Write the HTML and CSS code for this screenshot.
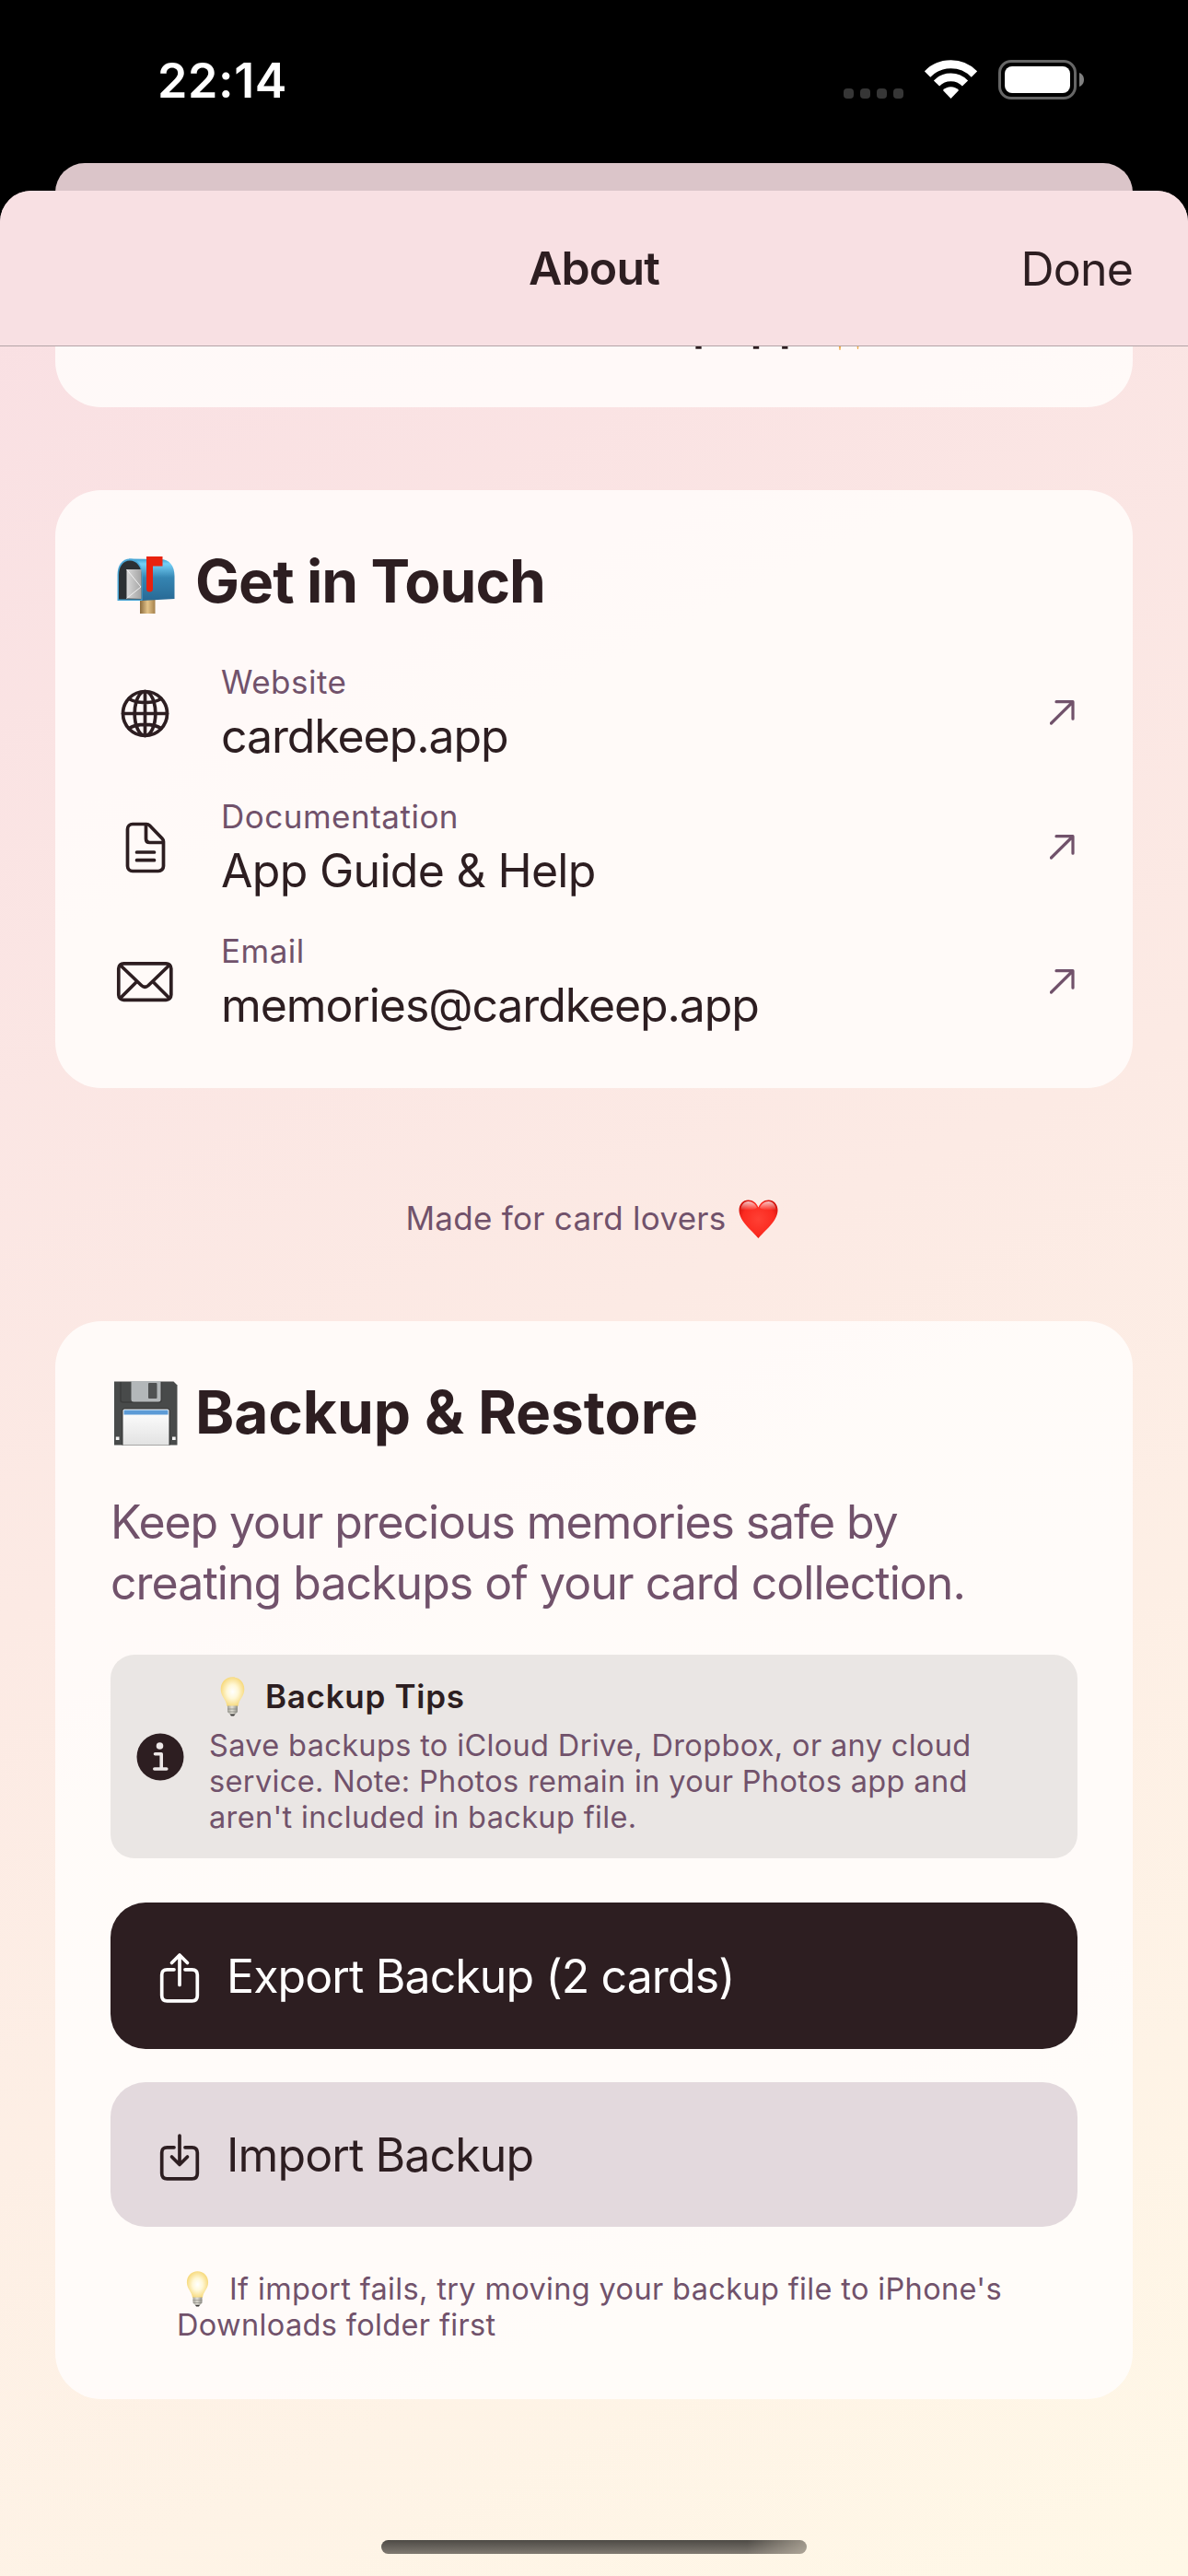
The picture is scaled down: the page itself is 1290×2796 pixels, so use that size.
FILE: index.html
```html
<!DOCTYPE html>
<html lang="en">
<head>
<meta charset="utf-8">
<title>About</title>
<link rel="stylesheet" href="styles.css">
</head>
<body>
<svg class="defs" aria-hidden="true">
  <defs>
    <radialGradient id="glow" cx="50%" cy="50%" r="58%">
      <stop offset="0" stop-color="#ffffff"/><stop offset=".4" stop-color="#fff8d8"/><stop offset="1" stop-color="#f5d267"/>
    </radialGradient>
    <linearGradient id="screw" x2="1" y2="0">
      <stop offset="0" stop-color="#a3a29a"/><stop offset=".45" stop-color="#e2e0d6"/><stop offset="1" stop-color="#908f88"/>
    </linearGradient>
    <linearGradient id="boxBlue" x2="0" y2="1">
      <stop offset="0" stop-color="#3d9fd0"/><stop offset=".12" stop-color="#74d0f7"/><stop offset=".45" stop-color="#3585b2"/><stop offset="1" stop-color="#286995"/>
    </linearGradient>
    <linearGradient id="post" x2="1" y2="0">
      <stop offset="0" stop-color="#8a6a3c"/><stop offset=".5" stop-color="#e4c48a"/><stop offset="1" stop-color="#a5814c"/>
    </linearGradient>
    <linearGradient id="letter" x2="1" y2="0">
      <stop offset="0" stop-color="#d9d9d9"/><stop offset="1" stop-color="#a4a4a4"/>
    </linearGradient>
    <linearGradient id="paper" x2="0" y2="1">
      <stop offset="0" stop-color="#ffffff"/><stop offset="1" stop-color="#e2e2e2"/>
    </linearGradient>
    <radialGradient id="heartRed" cx="50%" cy="50%" r="58%">
      <stop offset="0" stop-color="#ff4034"/><stop offset=".7" stop-color="#fb2a20"/><stop offset="1" stop-color="#d3120c"/>
    </radialGradient>
    <linearGradient id="shine" x2="0" y2="1">
      <stop offset="0" stop-color="#fff" stop-opacity=".75"/><stop offset="1" stop-color="#fff" stop-opacity="0"/>
    </linearGradient>
    <symbol id="bulb" viewBox="0 0 26 43">
      <path d="M13 .3C5.500.3.2 6 .2 13.500c0 8 6 11 6.800 18.500h12C19.800 24.500 25.800 21.500 25.800 13.500 25.800 6 20.500.3 13 .3z" fill="url(#glow)"/>
      <path d="M7.500 31.500h11v6.500l-2.500 2.500h-6l-2.500-2.500z" fill="url(#screw)"/>
      <path d="M7.500 35h11M8 38h10" stroke="#8c8b84" stroke-width=".8"/>
      <path d="M10 40.500h6l-1.500 2h-3z" fill="#3b3a38"/>
    </symbol>
    <symbol id="arrow" viewBox="0 0 30 30">
      <path d="M1.500 26 24.700 3M7 2.700h18v18.500" fill="none" stroke="currentColor" stroke-width="3.200" stroke-linecap="round" stroke-linejoin="round"/>
    </symbol>
  </defs>
</svg>

<header class="status">
  <span class="time">22:14</span>
  <div class="signals">
    <div class="dots"><i></i><i></i><i></i><i></i></div>
    <svg class="wifi" viewBox="0 0 57 42" width="57" height="42">
      <g fill="none" stroke="#fff">
        <path d="M3 15.500A35.500 35.500 0 0 1 54 15.500" stroke-width="9"/>
        <path d="M13 25.500A21.500 21.500 0 0 1 44 25.500" stroke-width="8.600"/>
      </g>
      <path d="M28.500 42l-8.600-9a12 12 0 0 1 17.200 0z" fill="#fff"/>
    </svg>
    <svg class="battery" viewBox="0 0 93 43" width="93" height="43">
      <rect x="1.500" y="1.500" width="82" height="40" rx="12.500" fill="none" stroke="#666" stroke-width="3"/>
      <rect x="7" y="7" width="71" height="29" rx="8" fill="#fff"/>
      <path d="M88 14c3 1 5 4 5 7.500s-2 6.500-5 7.500z" fill="#808080"/>
    </svg>
  </div>
</header>

<div class="behind"></div>

<main class="sheet">
  <nav class="bar">
    <h1 class="title">About</h1>
    <a class="done">Done</a>
  </nav>

  <div class="content">
    <section class="card card-tail">
      <span class="tail-text">p app</span>
      <svg width="40" height="60" viewBox="0 0 40 60"><path d="M8 50h4l-1.500 9h-1zM28 50h3l-1 8h-1z" fill="#f0ad4e"/></svg>
    </section>

    <section class="card touch">
      <h2 class="heading">
        <svg viewBox="0 0 76 78" width="76" height="78">
          <path d="M32 59h16.500v15H32z" fill="url(#post)"/>
          <path d="M20 14.500 54 15c10 0 15.500 7 15.500 18v25l-36 2z" fill="url(#boxBlue)"/>
          <path d="M7.500 60V32c0-10 5-17.500 13.500-17.500S34.500 22 34.500 32v28z" fill="#4ba7d6"/>
          <path d="M9 58.500V32c0-9 4.500-15.500 12-15.500S33.500 23 33.500 32v26.500z" fill="#2c3033"/>
          <path d="M17.500 26h16v32l-16-.5z" fill="url(#letter)"/>
          <path d="M17.500 26l15.500 19-15.500 12.500" fill="none" stroke="#f1f1f1" stroke-width="1"/>
          <path d="M39 12h17.500v10.500H46V47a3.500 3.500 0 0 1-7 0z" fill="#e8210e"/>
        </svg>
        <span>Get in Touch</span>
      </h2>
      <div class="links">
        <a class="link">
          <svg class="glyph" viewBox="0 0 75 60" width="75" height="60">
            <circle cx="37.500" cy="30.500" r="24"/><ellipse cx="37.500" cy="30.500" rx="11.300" ry="24"/>
            <path d="M37.500 6.500v48M13.500 30.500h48M20 14.500c9 5.500 26 5.500 35 0M20 46.500c9-5.500 26-5.500 35 0"/>
          </svg>
          <span class="text"><small class="label">Website</small><span class="value">cardkeep.app</span></span>
          <svg class="arrow" width="30" height="30"><use href="#arrow"/></svg>
        </a>
        <a class="link">
          <svg class="glyph" viewBox="0 0 75 60" width="75" height="60">
            <path d="M24 4.500h15c1.500 0 2.500.5 3.500 1.500l13.500 14c1 1 1.500 2 1.500 3.500V50a5.500 5.500 0 0 1-5.500 5.500H24a5.500 5.500 0 0 1-5.500-5.500V10A5.500 5.500 0 0 1 24 4.500z"/>
            <path d="M38.500 5v15.500c0 2.500 1.500 4 4 4H57M28.500 35h19M28.500 43.700h19"/>
          </svg>
          <span class="text"><small class="label">Documentation</small><span class="value">App Guide &amp; Help</span></span>
          <svg class="arrow" width="30" height="30"><use href="#arrow"/></svg>
        </a>
        <a class="link">
          <svg class="glyph" viewBox="0 0 75 60" width="75" height="60">
            <rect x="8.800" y="9.800" width="57" height="39.500" rx="5.500"/>
            <path d="M10.500 11.500 33.500 33.500c2.500 2.300 5.200 2.300 7.700 0L64 11.500M10.500 47.500 28.500 29.500M64 47.500 46 29.500"/>
          </svg>
          <span class="text"><small class="label">Email</small><span class="value">memories@cardkeep.app</span></span>
          <svg class="arrow" width="30" height="30"><use href="#arrow"/></svg>
        </a>
      </div>
    </section>

    <p class="made">
      <span>Made for card lovers</span>
      <svg viewBox="0 0 53 48" width="53" height="48">
        <path d="M26.500 46C21 39 5.500 28 5.500 15.500 5.500 9 10 4.500 15.500 4.500c5 0 9 3 11 8 2-5 6-8 11-8 5.500 0 10 4.500 10 11C47.500 28 32 39 26.500 46z" fill="url(#heartRed)"/>
        <path d="M7.500 15c0-5 3.500-9 8-9 4.500 0 8 3 9.500 7-4 3-14 3-17.500 2zM45.500 15c0-5-3.500-9-8-9-4.500 0-8 3-9.500 7 4 3 14 3 17.500 2z" fill="url(#shine)"/>
      </svg>
    </p>

    <section class="card backup">
      <h2 class="heading">
        <svg viewBox="0 0 76 78" width="76" height="78">
          <path d="M4 5.500h64.500l4 4V74.500H4z" fill="#484a4a"/>
          <path d="M11 6v20q0 2 3 2h38q3 0 3-2V6" fill="none" stroke="#3b3c3c" stroke-width="1.500"/>
          <path d="M22.500 5h32v20q0 2.500-2.500 2.500H25q-2.500 0-2.500-2.500z" fill="#b3b7b9"/>
          <rect x="41" y="7" width="9.500" height="17" rx="1" fill="#505253"/>
          <path d="M12.500 74.500v-37q0-3 3-3h46q3 0 3 3v37z" fill="#303131"/>
          <path d="M13.500 74.500V37q0-1.500 1.500-1.500h47q1.500 0 1.500 1.500v37.500z" fill="url(#paper)"/>
          <path d="M14.500 36.500h48v5h-48z" fill="#5c9bd6"/>
          <path d="M5.800 65.500h3.700v3.500H5.800zM67 65.500h3.700v3.500H67z" fill="#f4f4f4"/>
        </svg>
        <span>Backup &amp; Restore</span>
      </h2>
      <p class="lead">Keep your precious memories safe by<br><span class="wide">creating backups of your card collection.</span></p>

      <div class="tips">
        <svg class="info" viewBox="0 0 52 52" width="52" height="52">
          <circle cx="26" cy="26" r="25.500" fill="#2d1e21"/>
          <circle cx="25.500" cy="14" r="3.800" fill="#ece7e7"/>
          <path d="M20.500 22.800h6.700v15.700M19.800 39h13" fill="none" stroke="#ece7e7" stroke-width="3.600" stroke-linecap="round" stroke-linejoin="round"/>
        </svg>
        <div>
          <h3 class="tips-title"><svg width="51" height="43"><use href="#bulb" width="51" height="43"/></svg><span>Backup Tips</span></h3>
          <p class="tips-text">Save backups to iCloud Drive, Dropbox, or any cloud<br>service. Note: Photos remain in your Photos app and<br>aren't included in backup file.</p>
        </div>
      </div>

      <div class="actions">
        <button class="button export">
          <svg viewBox="0 0 50 60" width="50" height="60">
            <path d="M19 22.800h-7.500q-5.800 0-5.800 5.800v22.400q0 5.800 5.800 5.800h27q5.800 0 5.800-5.800V28.600q0-5.800-5.800-5.800H31M25 8v31.500M16.500 15.500 25 7l8.500 8.500"/>
          </svg>
          <span>Export Backup (2 cards)</span>
        </button>
        <button class="button import">
          <svg viewBox="0 0 50 60" width="50" height="60">
            <path d="M19 21.800h-7.500q-5.800 0-5.800 5.800v22.400q0 5.800 5.800 5.800h27q5.800 0 5.800-5.800V27.600q0-5.800-5.800-5.800H31M25 9v31M16.500 32 25 40.500l8.500-8.500"/>
          </svg>
          <span>Import Backup</span>
        </button>
      </div>

      <p class="note"><svg width="45" height="39"><use href="#bulb" width="45" height="39"/></svg>If import fails, try moving your backup file to iPhone's<br>Downloads folder first</p>
    </section>
  </div>
</main>
<div class="home"></div>
</body>
</html>
```
FILE: styles.css
```css
* { box-sizing: border-box; margin: 0; padding: 0; }

body {
  position: relative;
  width: 1290px;
  height: 2796px;
  overflow: hidden;
  display: flex;
  flex-direction: column;
  background: #000;
  color: #2d1e21;
  font: 400 50px/60px Inter, "Liberation Sans", sans-serif;
  letter-spacing: -1px;
}

svg { display: block; flex: none; }
.defs { position: absolute; width: 0; height: 0; }

/* Status bar */
.status {
  height: 177px;
  padding: 58px 113px 0 171px;
  display: flex;
  justify-content: space-between;
  align-items: flex-start;
  flex: none;
  color: #fff;
}
.time { font-size: 52px; font-weight: 600; letter-spacing: .6px; }
.signals { display: flex; align-items: flex-end; height: 50px; }
.dots { display: flex; gap: 7px; margin: 0 23px 1px 0; }
.dots i { width: 11px; height: 11px; border-radius: 4px; background: #363636; }
.wifi { margin: 0 23px 1px 0; }

/* Sheets */
.behind {
  flex: none;
  height: 60px;
  margin: 0 60px -30px;
  border-radius: 32px 32px 0 0;
  background: #dbc5c9;
}
.sheet {
  position: relative;
  flex: 1;
  min-height: 0;
  display: flex;
  flex-direction: column;
  overflow: hidden;
  border-radius: 34px 34px 0 0;
  background: linear-gradient(153.500deg, #f9dfe3 0%, #fceae4 48%, #fff8e7 100%);
}
.bar {
  flex: none;
  display: grid;
  grid-template-columns: 1fr auto 1fr;
  height: 169px;
  padding: 54px 60px 0;
  border-bottom: 1px solid #b3a3a6;
  background: #f8e0e3;
}
.title { grid-column: 2; font-size: 50px; font-weight: 600; letter-spacing: -.9px; }
.done { justify-self: end; padding-top: 1px; letter-spacing: -.8px; }

.content {
  flex: 1;
  min-height: 0;
  overflow: hidden;
  padding: 0 60px;
}
.card {
  padding: 60px 60px 0;
  border-radius: 50px;
  background: rgba(255, 253, 252, .86);
}
.card-tail {
  display: flex;
  justify-content: flex-end;
  gap: 25px;
  height: 121px;
  margin: -55px 0 90px;
  padding: 0 288px 0 0;
}
.tail-text { font-weight: 600; letter-spacing: 0; word-spacing: -10px; }

.heading {
  display: flex;
  align-items: center;
  gap: 16px;
  height: 78px;
  font-size: 64px;
  line-height: 80px;
  font-weight: 700;
  letter-spacing: -.95px;
}
.backup .heading { letter-spacing: -.1px; }

/* Contact links */
.touch { height: 649px; }
.links { display: flex; flex-direction: column; gap: 30px; margin-top: 46px; }
.link { display: flex; align-items: center; gap: 45px; height: 116px; }
.glyph { fill: none; stroke: currentColor; stroke-width: 3.700; stroke-linecap: round; stroke-linejoin: round; }
.text { flex: 1; display: flex; flex-direction: column; }
.label { font-size: 35px; line-height: 49px; letter-spacing: .5px; color: #71526b; }
.value { margin-bottom: -2px; line-height: 69px; letter-spacing: -1.100px; }
.link:nth-child(2) .value { letter-spacing: -.7px; }
.arrow { color: #71526b; }

.made {
  display: flex;
  justify-content: center;
  align-items: center;
  gap: 8px;
  height: 48px;
  margin: 117px 0 88px;
  font-size: 35px;
  letter-spacing: .28px;
  color: #71526b;
}

/* Backup and restore */
.backup { height: 1170px; }
.lead { margin: 47px 0 -1px; line-height: 66px; letter-spacing: -1.100px; color: #71526b; }
.wide { letter-spacing: -.97px; }
.tips {
  display: flex;
  align-items: center;
  gap: 27px;
  height: 221px;
  margin-top: 46px;
  padding-left: 28px;
  border-radius: 26px;
  background: #eae6e4;
}
.tips-title {
  display: flex;
  align-items: center;
  gap: 10px;
  height: 42px;
  font-size: 35px;
  font-weight: 600;
  letter-spacing: .7px;
}
.tips-text, .note { font-size: 32.500px; line-height: 39px; letter-spacing: .35px; color: #71526b; }
.tips-text { margin: 13px 0 1px; }

.actions { display: flex; flex-direction: column; gap: 36px; margin-top: 48px; }
.button {
  display: flex;
  align-items: center;
  gap: 26px;
  padding-left: 50px;
  border: 0;
  border-radius: 38px;
  font: inherit;
  letter-spacing: -.9px;
}
.button svg { fill: none; stroke: currentColor; stroke-width: 3.700; stroke-linecap: round; stroke-linejoin: round; }
.export { height: 159px; background: #2d1e21; color: #fff; }
.import { height: 157px; background: #e3d9dd; color: #2d1e21; }

.note { margin: 48px 0 0 72px; }
.note svg { display: inline-block; margin-right: 12px; vertical-align: top; }

.home {
  position: absolute;
  left: 414px;
  top: 2757px;
  width: 462px;
  height: 15px;
  border-radius: 8px;
  background: linear-gradient(90deg, transparent 86%, rgba(205, 195, 178, .6)), linear-gradient(#4d4a45, #807a72);
}
```
